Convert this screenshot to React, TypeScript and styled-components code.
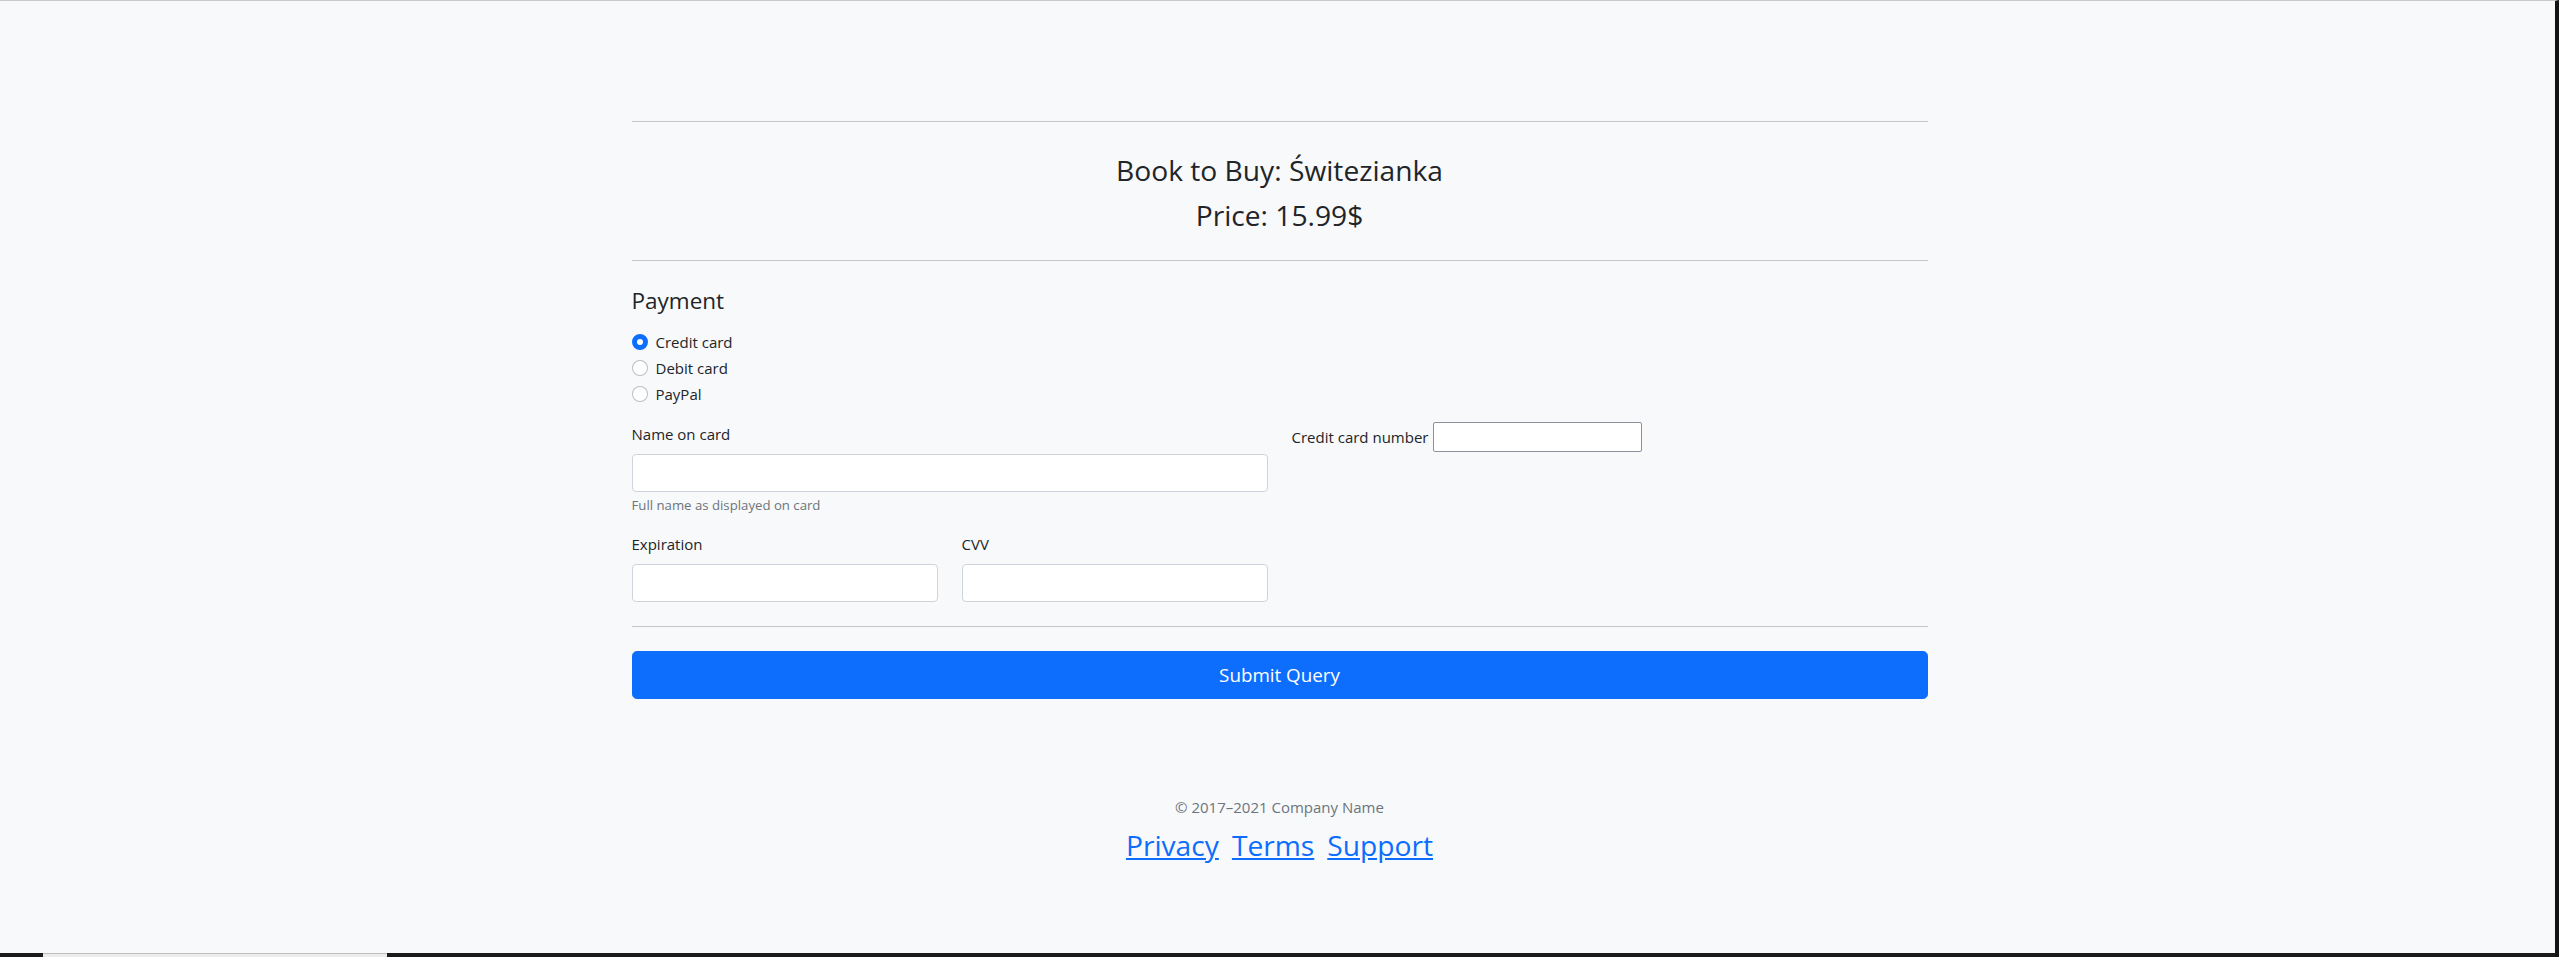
import React, { useState } from 'react'
import styled, { createGlobalStyle } from 'styled-components'

const GlobalStyle = createGlobalStyle`
    html, body {
        margin: 0;
        padding: 0;
    }
    body {
        font-family: "Open Sans", "Liberation Sans", sans-serif;
        font-size: 15px;
        line-height: 24px;
        color: #212529;
        background: #f8f9fa;
    }
    * {
        box-sizing: border-box;
    }
`

const Frame = styled.div`
    height: 957px;
    display: flex;
    flex-direction: column;
    border-top: 1px solid #c9c9c9;
    border-right: 4px solid #141414;
    overflow: hidden;
`

const Page = styled.div`
    flex: 1;
    padding-left: 4px;
    background: #f8f9fa;
`

const BottomBar = styled.div`
    height: 4px;
    flex: none;
    background: #1b1b1b;
    padding-left: 43px;
`

const BarThumb = styled.div`
    width: 344px;
    height: 4px;
    background: #ececec;
    border-top: 1px solid #bdbdbd;
`

const Container = styled.div`
    max-width: 1296px;
    margin: 0 auto;
    padding-top: 120px;
`

const Divider = styled.hr<{ $space: number }>`
    border: 0;
    border-top: 1px solid #c6c7c8;
    height: 0;
    margin: ${p => p.$space}px 0;
`

const Intro = styled.div`
    display: flex;
    flex-direction: column;
    align-items: center;
    gap: 9px;
    padding: 30px 0 27px;
`

const Title = styled.h3`
    margin: 0;
    font-size: 28.2px;
    font-weight: 400;
    line-height: 36px;
`

const PaymentForm = styled.form`
    margin-top: 25px;
`

const SectionTitle = styled.h4`
    margin: 0 0 15px;
    font-size: 22.5px;
    font-weight: 400;
    line-height: 29px;
`

const RadioGroup = styled.div`
    margin-bottom: 16px;
`

const RadioRow = styled.label`
    display: flex;
    align-items: center;
    gap: 8px;
    min-height: 24px;
    margin-bottom: 2px;
    cursor: pointer;
`

const RadioDot = styled.span<{ $checked: boolean }>`
    width: 16px;
    height: 16px;
    flex: none;
    border-radius: 50%;
    background: #fff;
    border: ${p => (p.$checked ? '5px solid #0d6efd' : '1px solid rgba(0, 0, 0, 0.25)')};
`

const FieldGrid = styled.div`
    display: grid;
    grid-template-columns: repeat(4, 1fr);
    column-gap: 24px;
    row-gap: 16px;
`

const Field = styled.div<{ $span: number }>`
    grid-column: span ${p => p.$span};
`

const InlineField = styled.div`
    grid-column: span 2;
    display: flex;
    align-items: center;
    gap: 5px;
    align-self: start;
    height: 30px;
`

const Label = styled.label`
    display: block;
    margin-bottom: 8px;
    line-height: 24px;
`

const InlineLabel = styled.label`
    line-height: 24px;
`

const TextInput = styled.input`
    display: block;
    width: 100%;
    height: 38px;
    padding: 6px 12px;
    font: inherit;
    color: #212529;
    background: #fff;
    border: 1px solid #ced4da;
    border-radius: 4px;
`

const PlainInput = styled.input`
    width: 209px;
    height: 30px;
    padding: 1px 2px;
    font: inherit;
    background: #fff;
    border: 1px solid #8f8f9d;
    border-radius: 2px;
`

const Hint = styled.div`
    margin-top: 3px;
    font-size: 13.2px;
    line-height: 21px;
    color: #6c757d;
`

const SubmitButton = styled.button`
    display: block;
    width: 100%;
    height: 48px;
    padding: 8px 16px;
    font: inherit;
    font-size: 18.8px;
    line-height: 30px;
    color: #fff;
    background: #0d6efd;
    border: 1px solid #0d6efd;
    border-radius: 4.8px;
    cursor: pointer;
`

const Footer = styled.footer`
    margin-top: 96px;
    text-align: center;
`

const Copyright = styled.p`
    margin: 0 0 4px;
    color: #6c757d;
    line-height: 24px;
`

const LinkList = styled.ul`
    display: flex;
    justify-content: center;
    gap: 13px;
    margin: 0;
    padding: 0;
    list-style: none;
    font-size: 28.2px;
    line-height: 45px;
`

const FooterLink = styled.a`
    color: #0d6efd;
    text-decoration: underline;
`

const methods = ['Credit card', 'Debit card', 'PayPal']

const App: React.FunctionComponent<{}> = () => {

    const [method, setMethod] = useState('Credit card')

    return (
        <>
            <GlobalStyle />
            <Frame>
                <Page>
                    <Container>
                        <Divider $space={0} />
                        <Intro>
                            <Title>Book to Buy: Świtezianka</Title>
                            <Title>Price: 15.99$</Title>
                        </Intro>
                        <Divider $space={0} />

                        <PaymentForm onSubmit={e => e.preventDefault()}>
                            <SectionTitle>Payment</SectionTitle>
                            <RadioGroup>
                                {
                                    methods.map(m => (
                                        <RadioRow key={m} onClick={() => setMethod(m)}>
                                            <RadioDot $checked={method === m} />
                                            {m}
                                        </RadioRow>
                                    ))
                                }
                            </RadioGroup>

                            <FieldGrid>
                                <Field $span={2}>
                                    <Label>Name on card</Label>
                                    <TextInput type="text" />
                                    <Hint>Full name as displayed on card</Hint>
                                </Field>
                                <InlineField>
                                    <InlineLabel>Credit card number</InlineLabel>
                                    <PlainInput type="text" />
                                </InlineField>
                                <Field $span={1}>
                                    <Label>Expiration</Label>
                                    <TextInput type="text" />
                                </Field>
                                <Field $span={1}>
                                    <Label>CVV</Label>
                                    <TextInput type="text" />
                                </Field>
                            </FieldGrid>

                            <Divider $space={24} />
                            <SubmitButton type="submit">Submit Query</SubmitButton>
                        </PaymentForm>

                        <Footer>
                            <Copyright>© 2017–2021 Company Name</Copyright>
                            <LinkList>
                                <li><FooterLink href="#">Privacy</FooterLink></li>
                                <li><FooterLink href="#">Terms</FooterLink></li>
                                <li><FooterLink href="#">Support</FooterLink></li>
                            </LinkList>
                        </Footer>
                    </Container>
                </Page>
                <BottomBar>
                    <BarThumb />
                </BottomBar>
            </Frame>
        </>
    )
}

export default App
